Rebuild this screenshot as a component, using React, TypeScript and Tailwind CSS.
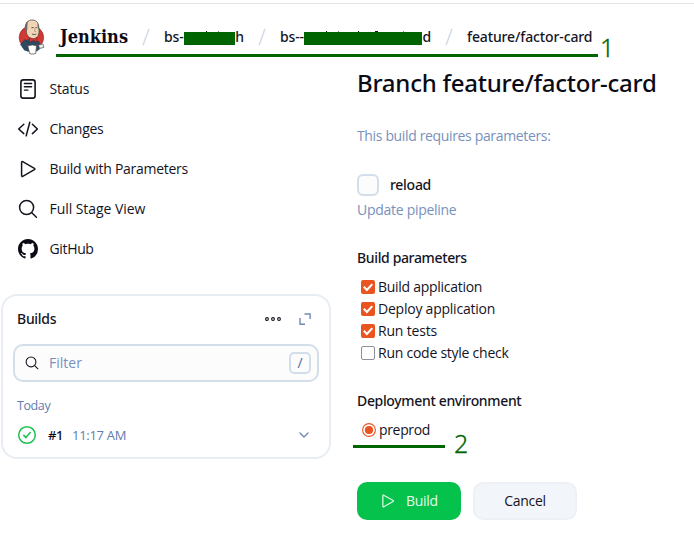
import type { ReactNode } from "react";

type IconProps = { className?: string };

function JenkinsLogo() {
  return (
    <svg width="28" height="36" viewBox="0 0 28 36" className="shrink-0">
      <ellipse cx="13.4" cy="18.6" rx="12.2" ry="11.8" fill="#d33833" stroke="#8b2a2a" strokeWidth="0.7" />
      <path d="M5.8 22.5 10.5 20l7 .6 4.4 2.6.6 6.3-3.4 2.8-9.6.2-4.8-4z" fill="#2d4a62" />
      <path d="M2.5 25.5 7 20.5l4 4-.5 7.5-4-.8z" fill="#2d4a62" stroke="#1d3347" strokeWidth="0.5" />
      <path d="M8 6.2C8.4 2.6 11.4.7 14.8 1c4 .4 6 3.4 6 7.4 0 2.2.8 4.8-.4 7.6-.9 2.4-3 4-5.2 4-2.4 0-5.2-2-6.2-4.6C8.2 13 7.7 9.5 8 6.2z" fill="#f0d6b7" stroke="#514a43" strokeWidth="0.8" />
      <path d="M7.6 12C5.8 8.6 7 3.5 10.6 1.8c-1.5 2.4-.9 4.4-1.3 6.8.5 1.4-.5 2-.4 3.8z" fill="#6a6a68" />
      <path d="M19.4 4.2c1.4 1.6 1.8 4 1.6 6l-1.2-.8z" fill="#6a6a68" />
      <path d="M13.4 8.6h2.4M17.4 8.6h1.8M14 15c1.4.8 3 .6 4.4 0" stroke="#514a43" strokeWidth="0.9" fill="none" />
      <path d="M16.8 9.2v3.3h1.2" stroke="#ae8d6e" strokeWidth="0.8" fill="none" />
      <path d="m11.4 18.6 4 1.5 3.5-1.7.3 4.2-3.8-1-4 1.5z" fill="#d33833" stroke="#7d2020" strokeWidth="0.6" />
      <path d="m20.5 26 4.4-1 1 3.4-4.4 1z" fill="#eee" stroke="#555" strokeWidth="0.7" />
      <path d="m9.8 26.7 4.6-.8 4.1.8-.8 7.8c-2 .7-4.5.7-6.1 0z" fill="#fff" stroke="#555" strokeWidth="0.8" />
    </svg>
  );
}

function StatusIcon() {
  return (
    <svg width="20" height="20" viewBox="0 0 20 20" fill="none" stroke="#14141f" strokeLinecap="round">
      <rect x="2.9" y="0.9" width="14.2" height="18.2" rx="2.4" strokeWidth="1.6" />
      <path d="M6.4 4.5h7.2M6.4 7.8h7.2M6.4 11.1h3.6" strokeWidth="1.4" />
    </svg>
  );
}

function CodeIcon() {
  return (
    <svg width="20" height="20" viewBox="0 0 20 20" fill="none" stroke="#14141f" strokeWidth="1.5" strokeLinecap="round" strokeLinejoin="round">
      <path d="M5.8 5.2.7 10l5.1 4.6M14.4 5.2l5 4.8-5 4.6M11.8 3.2 8.2 16.8" />
    </svg>
  );
}

function PlayIcon({ className }: IconProps) {
  return (
    <svg width="20" height="20" viewBox="0 0 20 20" fill="none" stroke="currentColor" strokeWidth="1.5" strokeLinejoin="round" className={className}>
      <path d="M3.6 3.4c0-.8.5-1 1.1-.7l11.7 6.6c.6.4.6 1 0 1.4L4.7 17.3c-.6.3-1.1 0-1.1-.7z" />
    </svg>
  );
}

function SearchIcon({ className }: IconProps) {
  return (
    <svg width="20" height="20" viewBox="0 0 20 20" fill="none" stroke="#14141f" strokeWidth="1.5" strokeLinecap="round" className={className}>
      <circle cx="8.6" cy="8.5" r="7" />
      <path d="m13.8 13.7 4.6 4.6" />
    </svg>
  );
}

function GitHubIcon() {
  return (
    <svg width="20" height="20" viewBox="0 0 16 16" fill="#0b0b17">
      <path d="M8 0C3.58 0 0 3.58 0 8c0 3.54 2.29 6.53 5.47 7.59.4.07.55-.17.55-.38 0-.19-.01-.82-.01-1.49-2.01.37-2.53-.49-2.69-.94-.09-.23-.48-.94-.82-1.13-.28-.15-.68-.52-.01-.53.63-.01 1.08.58 1.23.82.72 1.21 1.87.87 2.33.66.07-.52.28-.87.51-1.07-1.78-.2-3.64-.89-3.64-3.95 0-.87.31-1.59.82-2.15-.08-.2-.36-1.02.08-2.12 0 0 .67-.21 2.2.82.64-.18 1.32-.27 2-.27s1.36.09 2 .27c1.53-1.04 2.2-.82 2.2-.82.44 1.1.16 1.92.08 2.12.51.56.82 1.27.82 2.15 0 3.07-1.87 3.75-3.65 3.95.29.25.54.73.54 1.48 0 1.07-.01 1.93-.01 2.2 0 .21.15.46.55.38A8.01 8.01 0 0 0 16 8c0-4.42-3.58-8-8-8z" />
    </svg>
  );
}

function Slash({ className }: IconProps) {
  return (
    <svg width="8" height="18" viewBox="0 0 8 18" className={className}>
      <path d="M7 .8 1 17.2" stroke="#d3dbe8" strokeWidth="1.5" fill="none" />
    </svg>
  );
}

function NavItem({ icon, className, children }: { icon: ReactNode; className: string; children: string }) {
  return (
    <a className="flex h-10 items-center gap-[11.5px] pl-[18px]">
      {icon}
      <span className={className}>{children}</span>
    </a>
  );
}

function Check({ label, checked, className }: { label: string; checked?: boolean; className: string }) {
  return (
    <label className="flex h-[22px] items-center gap-[3px] pl-1">
      {checked ? (
        <svg width="14" height="14" viewBox="0 0 14 14">
          <rect width="14" height="14" rx="2" fill="#e95420" />
          <path d="m2.8 6.8 3.1 3.1 5.4-5.8" stroke="#fff" strokeWidth="2.1" fill="none" />
        </svg>
      ) : (
        <span className="size-[14px] rounded-[2px] border border-[#8f8f9d] bg-white" />
      )}
      <span className={className}>{label}</span>
    </label>
  );
}

export default function App() {
  return (
    <div className="relative h-[542px] w-[694px] overflow-hidden bg-white font-['Open_Sans',sans-serif] text-[14px] leading-5 tracking-[-0.28px] text-[#14141f]">
      <header className="mt-[3px] flex h-[66px] items-start border-t border-[#e4e4e6]">
        <div className="flex h-[66px] w-full items-center whitespace-nowrap pl-[18px] font-['Noto_Sans',sans-serif] font-medium tracking-[-0.12px]">
          <JenkinsLogo />
          <span className="ml-[14px] w-[68px] font-['DejaVu_Serif_Condensed','DejaVu_Serif',serif] text-[18px] font-bold tracking-normal text-[#0b0b17]">Jenkins</span>
          <Slash className="ml-[14px]" />
          <div className="relative ml-[14px] flex w-20 justify-between">
            <span>bs-</span>
            <span>ch</span>
            <i className="absolute left-[42px] top-[4px] h-1 w-px bg-[#14141f]" />
            <i className="absolute left-[54px] top-[4px] h-1 w-px bg-[#14141f]/50" />
            <i className="absolute left-5 top-[5px] h-[13px] w-[51px] bg-[#006400]" />
          </div>
          <Slash className="ml-[14px]" />
          <div className="relative ml-[14px] flex w-[151px] justify-between">
            <span>bs--</span>
            <span>d</span>
            <i className="absolute left-[46px] top-[4px] h-1 w-px bg-[#14141f]" />
            <i className="absolute left-[58px] top-[4px] h-1 w-px bg-[#14141f]/50" />
            <i className="absolute left-[78px] top-[4px] h-1 w-px bg-[#14141f]" />
            <i className="absolute left-[95px] top-[4px] h-1 w-[3px] bg-[#14141f]" />
            <i className="absolute left-[123px] top-[4px] h-1 w-px bg-[#14141f]/50" />
            <i className="absolute left-6 top-[5px] h-[13px] w-[118px] bg-[#006400]" />
          </div>
          <Slash className="ml-[14px]" />
          <span className="ml-[14px]">feature/factor-card</span>
        </div>
      </header>
      <i className="absolute left-14 top-[54px] h-[3px] w-[542px] bg-[#006400]" />
      <span className="absolute left-[600px] top-[32px] font-['Noto_Sans',sans-serif] text-[25px] font-light leading-[30px] tracking-normal text-[#006400] [-webkit-text-stroke:0.3px_#006400]">1</span>

      <div className="flex">
        <aside className="w-[357px] shrink-0">
          <nav>
            <NavItem icon={<StatusIcon />} className="tracking-[-0.15px]">Status</NavItem>
            <NavItem icon={<CodeIcon />} className="">Changes</NavItem>
            <NavItem icon={<PlayIcon />} className="">Build with Parameters</NavItem>
            <NavItem icon={<SearchIcon />} className="tracking-[-0.06px]">Full Stage View</NavItem>
            <NavItem icon={<GitHubIcon />} className="tracking-[-0.35px]">GitHub</NavItem>
          </nav>
          <section className="ml-px mt-[25px] h-[165px] w-[330px] rounded-[16px] border-2 border-[#e8edf4] px-[10px]">
            <div className="flex h-[46px] items-center pl-1">
              <span className="flex-1 font-['Noto_Sans',sans-serif] font-medium">Builds</span>
              <svg width="16" height="6" viewBox="0 0 16 6" fill="none" stroke="#14141f" strokeWidth="1.1">
                <circle cx="2" cy="3" r="1.4" /><circle cx="8" cy="3" r="1.4" /><circle cx="14" cy="3" r="1.4" />
              </svg>
              <svg width="12" height="12" viewBox="0 0 12 12" fill="none" stroke="#6f8ab8" strokeWidth="1.4" className="ml-[18px] mr-2">
                <path d="M5.5 1h5.6v5M1 5v6.2h5" />
              </svg>
            </div>
            <div className="mt-[2px] flex h-[38px] w-[306px] items-center rounded-[10px] border-2 border-[#d3deea] bg-[#fcfcfd] pl-[10px] pr-[6px]">
              <SearchIcon className="size-[14px]" />
              <span className="ml-[10px] flex-1 tracking-normal text-[#7891bd]">Filter</span>
              <span className="flex size-[22px] items-center justify-center rounded-[5px] border-2 border-[#d3deea] text-[14px] text-[#4d6a9c]">/</span>
            </div>
            <div className="mt-[14px] pl-1 text-[12.5px] leading-5 tracking-[-0.4px] text-[#5f7cb0]">Today</div>
            <div className="mt-[9px] flex h-5 items-center pl-1">
              <svg width="20" height="20" viewBox="0 0 20 20" fill="none" stroke="#1ac350" strokeWidth="1.5" strokeLinecap="round" strokeLinejoin="round">
                <circle cx="10" cy="10" r="8.3" />
                <path d="m6.8 10.4 2.2 2.2 4.2-5" />
              </svg>
              <span className="ml-[11px] w-[15px] font-['Noto_Sans',sans-serif] text-[13px] font-medium text-[#0b0b17]">#1</span>
              <span className="ml-[9px] flex-1 text-[13px] text-[#5f7cb0]">11:17 AM</span>
              <svg width="10" height="6" viewBox="0 0 10 6" fill="none" stroke="#6f8ab8" strokeWidth="1.4" strokeLinecap="round" className="mr-[10px]">
                <path d="m1 1 4 4 4-4" />
              </svg>
            </div>
          </section>
        </aside>

        <main className="whitespace-nowrap">
          <h1 className="-mt-[2px] font-['Noto_Sans',sans-serif] text-[24px] font-medium leading-8 tracking-[-0.25px] text-[#0b0b17]">Branch feature/factor-card</h1>
          <p className="mt-[27px] tracking-[-0.35px] text-[#7891bd]">This build requires parameters:</p>
          <div className="mt-[28px] flex h-[22px] items-center">
            <span className="size-[22px] rounded-[6px] border-2 border-[#d3deea] bg-[#fcfcfd]" />
            <span className="ml-[11px] font-['Noto_Sans',sans-serif] font-medium">reload</span>
          </div>
          <p className="mt-1 text-[#7891bd]">Update pipeline</p>
          <h2 className="mt-[28px] font-['Noto_Sans',sans-serif] font-medium tracking-[-0.36px]">Build parameters</h2>
          <div className="mt-[8px]">
            <Check label="Build application" checked className="" />
            <Check label="Deploy application" checked className="tracking-[-0.23px]" />
            <Check label="Run tests" checked className="tracking-[-0.18px]" />
            <Check label="Run code style check" className="tracking-[-0.25px]" />
          </div>
          <h2 className="mt-[27px] font-['Noto_Sans',sans-serif] font-medium tracking-[-0.34px]">Deployment environment</h2>
          <label className="mt-[9px] flex h-5 items-center gap-[3px] pl-[5px]">
            <svg width="14" height="14" viewBox="0 0 14 14">
              <circle cx="7" cy="7" r="6.4" fill="#fff" stroke="#e95420" strokeWidth="1.1" />
              <circle cx="7" cy="7" r="4.1" fill="#e95420" />
            </svg>
            <span className="tracking-[-0.34px]">preprod</span>
          </label>
          <div className="mt-[42px] flex gap-3">
            <button className="flex h-[38px] w-[104px] items-center rounded-[10px] bg-[#04c24c] pl-[23px] text-[#e6f9ed]">
              <PlayIcon className="size-4" />
              <span className="ml-[10px]">Build</span>
            </button>
            <button className="h-[38px] w-[104px] rounded-[10px] border-2 border-[#edf1f6] bg-[#f2f5f9]">Cancel</button>
          </div>
        </main>
      </div>
      <i className="absolute left-[353px] top-[445px] h-[3px] w-[92px] bg-[#006400]" />
      <span className="absolute left-[454px] top-[428px] font-['Noto_Sans',sans-serif] text-[25px] font-light leading-[30px] tracking-normal text-[#006400] [-webkit-text-stroke:0.3px_#006400]">2</span>
    </div>
  );
}
